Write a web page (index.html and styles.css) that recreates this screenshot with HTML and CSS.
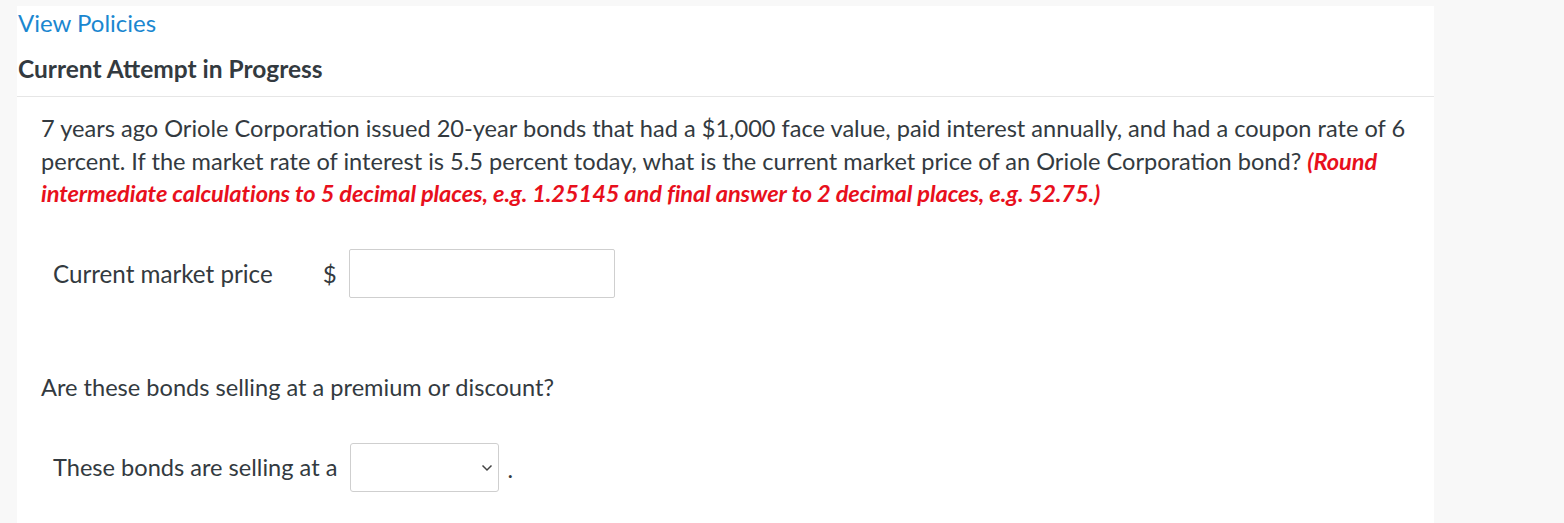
FILE: index.html
```html
<!DOCTYPE html>
<html lang="en">
<head>
<meta charset="utf-8">
<title>Current Attempt in Progress</title>
<link rel="stylesheet" href="styles.css">
</head>
<body>
<main class="panel">
  <header class="panel-head">
    <a class="policies" href="#">View Policies</a>
    <h2 class="attempt">Current Attempt in Progress</h2>
  </header>
  <section class="question">
    <p class="stem">7 years ago Oriole Corporation issued 20-year bonds that had a $1,000 face value, paid interest annually, and had a coupon rate of 6 percent. If the market rate of interest is 5.5 percent today, what is the current market price of an Oriole Corporation bond? <em class="hint">(Round intermediate calculations to 5 decimal places, e.g. 1.25145 and final answer to 2 decimal places, e.g. 52.75.)</em></p>
    <div class="row row-price">
      <span class="label">Current market price</span>
      <span class="currency">$</span>
      <input class="field" type="text" aria-label="Current market price">
    </div>
    <p class="sub">Are these bonds selling at a premium or discount?</p>
    <div class="row row-select">
      <span class="label">These bonds are selling at a</span>
      <span class="select-wrap">
        <select class="dropdown" aria-label="premium or discount">
          <option></option>
          <option>premium</option>
          <option>discount</option>
        </select>
        <svg class="chev" width="12" height="8" viewBox="0 0 12 8"><path d="M1.5 1.5 L6 6 L10.5 1.5" fill="none" stroke="#444" stroke-width="1.5"/></svg>
      </span>
      <span class="dot">.</span>
    </div>
  </section>
</main>
</body>
</html>
```
FILE: styles.css
```css
html, body {
  margin: 0;
  padding: 0;
  background: #f8f8f8;
  height: 100%;
}
body {
  font-family: Lato, "Open Sans", sans-serif;
  color: #333a40;
  font-size: 23.6px;
  overflow: hidden;
}
.panel {
  background: #ffffff;
  margin: 6px 0 0 17px;
  width: 1417px;
  min-height: 600px;
}
.panel-head {
  display: flex;
  flex-direction: column;
  padding: 0 0 0 1px;
  border-bottom: 1px solid #e6e6e6;
  height: 90px;
}
.policies {
  color: #1a87d0;
  text-decoration: none;
  font-size: 24px;
  line-height: 34px;
}
.attempt {
  margin: 15px 0 0 0;
  font-size: 24.5px;
  font-weight: 700;
  line-height: 28px;
  color: #333a40;
}
.question {
  padding: 15px 22px 0 24px;
}
.stem {
  margin: 0;
  font-size: 23.6px;
  line-height: 32.5px;
}
.hint {
  color: #e8101c;
  font-weight: 700;
  font-style: italic;
  letter-spacing: -0.1px;
}
.row {
  display: flex;
  align-items: center;
  padding-left: 12px;
}
.row-price {
  margin-top: 39px;
}
.row-price .label {
  font-size: 24.2px;
}
.currency {
  margin-left: 50px;
  margin-right: 12px;
  font-size: 24px;
}
.field {
  width: 266px;
  height: 49px;
  box-sizing: border-box;
  border: 1px solid #cfcfcf;
  border-radius: 2px;
  background: #fff;
  margin: 0;
}
.sub {
  margin: 73px 0 0 0;
  line-height: 33px;
}
.row-select {
  margin-top: 39px;
}
.select-wrap {
  position: relative;
  display: inline-flex;
  margin-left: 13px;
}
.dropdown {
  appearance: none;
  -webkit-appearance: none;
  width: 149px;
  height: 49px;
  box-sizing: border-box;
  border: 1px solid #cfcfcf;
  border-radius: 3px;
  background: #fff;
  margin: 0;
  font-family: inherit;
  font-size: 18px;
}
.chev {
  position: absolute;
  right: 6px;
  top: 21px;
  pointer-events: none;
}
.dot {
  margin-left: 8px;
  line-height: 1;
  padding-top: 6px;
}
```
